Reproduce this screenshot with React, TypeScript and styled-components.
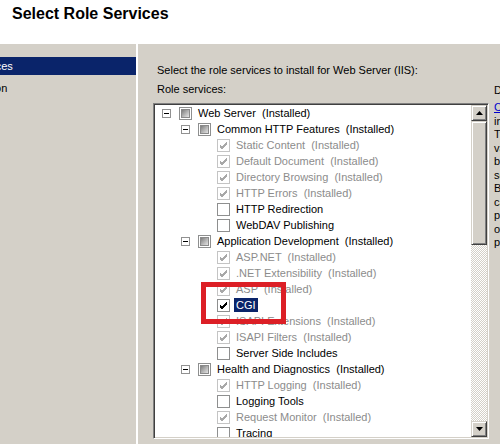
import React from "react";
import styled, { createGlobalStyle, css } from "styled-components";

const GlobalStyle = createGlobalStyle`
  html, body {
    margin: 0;
    padding: 0;
    width: 500px;
    height: 444px;
    overflow: hidden;
    background: #ffffff;
  }
  body {
    font-family: "Liberation Sans", Arial, sans-serif;
    font-size: 11px;
    color: #000;
  }
`;

const Page = styled.div`
  width: 500px;
  height: 444px;
  display: flex;
  flex-direction: column;
  overflow: hidden;
`;

const Header = styled.div`
  height: 44px;
  flex: none;
  background: #fff;
  padding: 5px 0 0 12px;
  box-sizing: border-box;
`;

const Title = styled.h1`
  margin: 0;
  font-family: "Liberation Sans", Arial, sans-serif;
  font-weight: bold;
  font-size: 16px;
  line-height: 18px;
`;

const Body = styled.div`
  flex: 1;
  display: flex;
  background: #d4d0c8;
  min-height: 0;
`;

const Nav = styled.div`
  width: 136px;
  flex: none;
  padding-top: 13px;
  display: flex;
  flex-direction: column;
  gap: 4px;
  border-right: 2px solid #ffffff;
  overflow: hidden;
`;

const NavItem = styled.div<{ $active?: boolean }>`
  height: 18px;
  line-height: 18px;
  white-space: nowrap;
  text-indent: -55px;
  ${({ $active }) =>
    $active &&
    css`
      background: #0a246a;
      color: #fff;
    `}
`;

const Main = styled.div`
  flex: 1;
  display: flex;
  gap: 5px;
  padding-left: 15px;
  min-width: 0;
`;

const Column = styled.div`
  width: 336px;
  flex: none;
  padding-top: 19px;
  display: flex;
  flex-direction: column;
`;

const Label = styled.div<{ $gap?: number; $flush?: boolean }>`
  padding-left: ${({ $flush }) => ($flush ? 0 : 4)}px;
  line-height: 14px;
  white-space: nowrap;
  margin-bottom: ${({ $gap }) => $gap ?? 0}px;
`;

const ListBox = styled.div`
  position: relative;
  height: 336px;
  display: flex;
  background: #fff;
  border-top: 1px solid #808080;
  border-left: 1px solid #808080;
  border-right: 1px solid #ffffff;
  border-bottom: 1px solid #ffffff;
  box-shadow: inset 1px 1px 0 #404040, inset -1px -1px 0 #d4d0c8;
  padding: 1px;
  box-sizing: border-box;
`;

const Tree = styled.div`
  flex: 1;
  overflow: hidden;
`;

const Row = styled.div<{ $level: number }>`
  height: 16px;
  display: flex;
  align-items: center;
  padding-left: ${({ $level }) => 7 + 19 * $level}px;
  white-space: pre;
`;

const ExpanderSlot = styled.span`
  width: 9px;
  height: 9px;
  flex: none;
  margin-right: 8px;
  box-sizing: border-box;
  position: relative;
`;

const Expander = styled(ExpanderSlot)`
  border: 1px solid #919191;
  background: #fff;
  &::after {
    content: "";
    position: absolute;
    left: 1px;
    top: 3px;
    width: 5px;
    height: 1px;
    background: #000;
  }
`;

type BoxState = "tri" | "grayed" | "checked" | "unchecked";

const Box = styled.span<{ $state: BoxState }>`
  width: 13px;
  height: 13px;
  flex: none;
  margin-right: 6px;
  box-sizing: border-box;
  border: 1px solid
    ${({ $state }) => ($state === "grayed" ? "#c4c4c4" : "#8e8f8f")};
  background: #fff;
  display: flex;
  align-items: center;
  justify-content: center;
`;

const TriFill = styled.span`
  width: 9px;
  height: 9px;
  border: 1px solid #8a8a8a;
  box-sizing: border-box;
  background: linear-gradient(135deg, #7d7d7d 0%, #b8b8b8 55%, #e4e4e4 100%);
`;

const ItemText = styled.span<{ $dim?: boolean; $selected?: boolean }>`
  line-height: 14px;
  color: ${({ $dim }) => ($dim ? "#8c8c8c" : "#000")};
  ${({ $selected }) =>
    $selected &&
    css`
      background: #0a246a;
      color: #fff;
      padding: 0 2px;
      margin-left: -2px;
    `}
`;

const Highlight = styled.div`
  position: absolute;
  left: 47px;
  top: 178px;
  width: 85px;
  height: 42px;
  border: 5px solid #dc1f26;
  box-sizing: border-box;
  pointer-events: none;
`;

const ScrollBar = styled.div`
  width: 16px;
  flex: none;
  display: flex;
  flex-direction: column;
`;

const ScrollButton = styled.div`
  height: 16px;
  flex: none;
  background: #d4d0c8;
  box-sizing: border-box;
  border-top: 1px solid #d4d0c8;
  border-left: 1px solid #d4d0c8;
  border-right: 1px solid #404040;
  border-bottom: 1px solid #404040;
  box-shadow: inset 1px 1px 0 #fff, inset -1px -1px 0 #808080;
  display: flex;
  align-items: center;
  justify-content: center;
`;

const Thumb = styled(ScrollButton)`
  height: 124px;
`;

const Track = styled.div`
  flex: 1;
  background: repeating-conic-gradient(#d4d0c8 0 25%, #ffffff 0 50%) 0 0 / 2px
    2px;
`;

const Description = styled.div`
  padding-top: 39px;
  width: 200px;
  flex: none;
  white-space: nowrap;
`;

const DescLines = styled.div`
  margin-top: 4px;
  line-height: 13.5px;
`;

const Link = styled.span`
  color: #0000cc;
  text-decoration: underline;
`;

const Check = ({ color }: { color: string }) => (
  <svg width="9" height="9" viewBox="0 0 9 9">
    <path
      d="M1 4 L3 6 L8 1 M1 5 L3 7 L8 2 M1 6 L3 8 L8 3"
      stroke={color}
      strokeWidth="1"
      fill="none"
      shapeRendering="crispEdges"
    />
  </svg>
);

const Arrow = ({ up }: { up?: boolean }) => (
  <svg width="7" height="4" viewBox="0 0 7 4">
    <path d={up ? "M3.5 0 L7 4 L0 4 Z" : "M0 0 L7 0 L3.5 4 Z"} fill="#000" />
  </svg>
);

type Item = {
  level: number;
  label: string;
  state: BoxState;
  parent?: boolean;
  selected?: boolean;
};

const items: Item[] = [
  { level: 0, label: "Web Server  (Installed)", state: "tri", parent: true },
  { level: 1, label: "Common HTTP Features  (Installed)", state: "tri", parent: true },
  { level: 2, label: "Static Content  (Installed)", state: "grayed" },
  { level: 2, label: "Default Document  (Installed)", state: "grayed" },
  { level: 2, label: "Directory Browsing  (Installed)", state: "grayed" },
  { level: 2, label: "HTTP Errors  (Installed)", state: "grayed" },
  { level: 2, label: "HTTP Redirection", state: "unchecked" },
  { level: 2, label: "WebDAV Publishing", state: "unchecked" },
  { level: 1, label: "Application Development  (Installed)", state: "tri", parent: true },
  { level: 2, label: "ASP.NET  (Installed)", state: "grayed" },
  { level: 2, label: ".NET Extensibility  (Installed)", state: "grayed" },
  { level: 2, label: "ASP  (Installed)", state: "grayed" },
  { level: 2, label: "CGI", state: "checked", selected: true },
  { level: 2, label: "ISAPI Extensions  (Installed)", state: "grayed" },
  { level: 2, label: "ISAPI Filters  (Installed)", state: "grayed" },
  { level: 2, label: "Server Side Includes", state: "unchecked" },
  { level: 1, label: "Health and Diagnostics  (Installed)", state: "tri", parent: true },
  { level: 2, label: "HTTP Logging  (Installed)", state: "grayed" },
  { level: 2, label: "Logging Tools", state: "unchecked" },
  { level: 2, label: "Request Monitor  (Installed)", state: "grayed" },
  { level: 2, label: "Tracing", state: "unchecked" },
];

const descLines = [
  "information to an external program.",
  "Typical uses might include using",
  "various forms to collect information",
  "before passing that information to a",
  "script to be emailed somewhere else.",
  "Because CGI is a standard, CGI scripts",
  "can be written using a variety of",
  "programming languages. The downside",
  "of using CGI is the",
  "performance overhead.",
];

export default function App() {
  return (
    <Page>
      <GlobalStyle />
      <Header>
        <Title>Select Role Services</Title>
      </Header>
      <Body>
        <Nav>
          <NavItem $active>Role Services</NavItem>
          <NavItem>Confirmation</NavItem>
        </Nav>
        <Main>
          <Column>
            <Label $gap={5}>
              Select the role services to install for Web Server (IIS):
            </Label>
            <Label $gap={7}>Role services:</Label>
            <ListBox>
              <Tree>
                {items.map((it) => (
                  <Row key={it.label} $level={it.level}>
                    {it.parent ? <Expander /> : <ExpanderSlot />}
                    <Box $state={it.state}>
                      {it.state === "tri" && <TriFill />}
                      {it.state === "grayed" && <Check color="#a8a8a8" />}
                      {it.state === "checked" && <Check color="#000" />}
                    </Box>
                    <ItemText
                      $dim={it.state === "grayed"}
                      $selected={it.selected}
                    >
                      {it.label}
                    </ItemText>
                  </Row>
                ))}
              </Tree>
              <ScrollBar>
                <ScrollButton>
                  <Arrow up />
                </ScrollButton>
                <Thumb />
                <Track />
                <ScrollButton>
                  <Arrow />
                </ScrollButton>
              </ScrollBar>
              <Highlight />
            </ListBox>
          </Column>
          <Description>
            <Label $flush>Description:</Label>
            <DescLines>
              <div>
                <Link>CGI</Link> defines how a Web server passes
              </div>
              {descLines.map((l) => (
                <div key={l}>{l}</div>
              ))}
            </DescLines>
          </Description>
        </Main>
      </Body>
    </Page>
  );
}
